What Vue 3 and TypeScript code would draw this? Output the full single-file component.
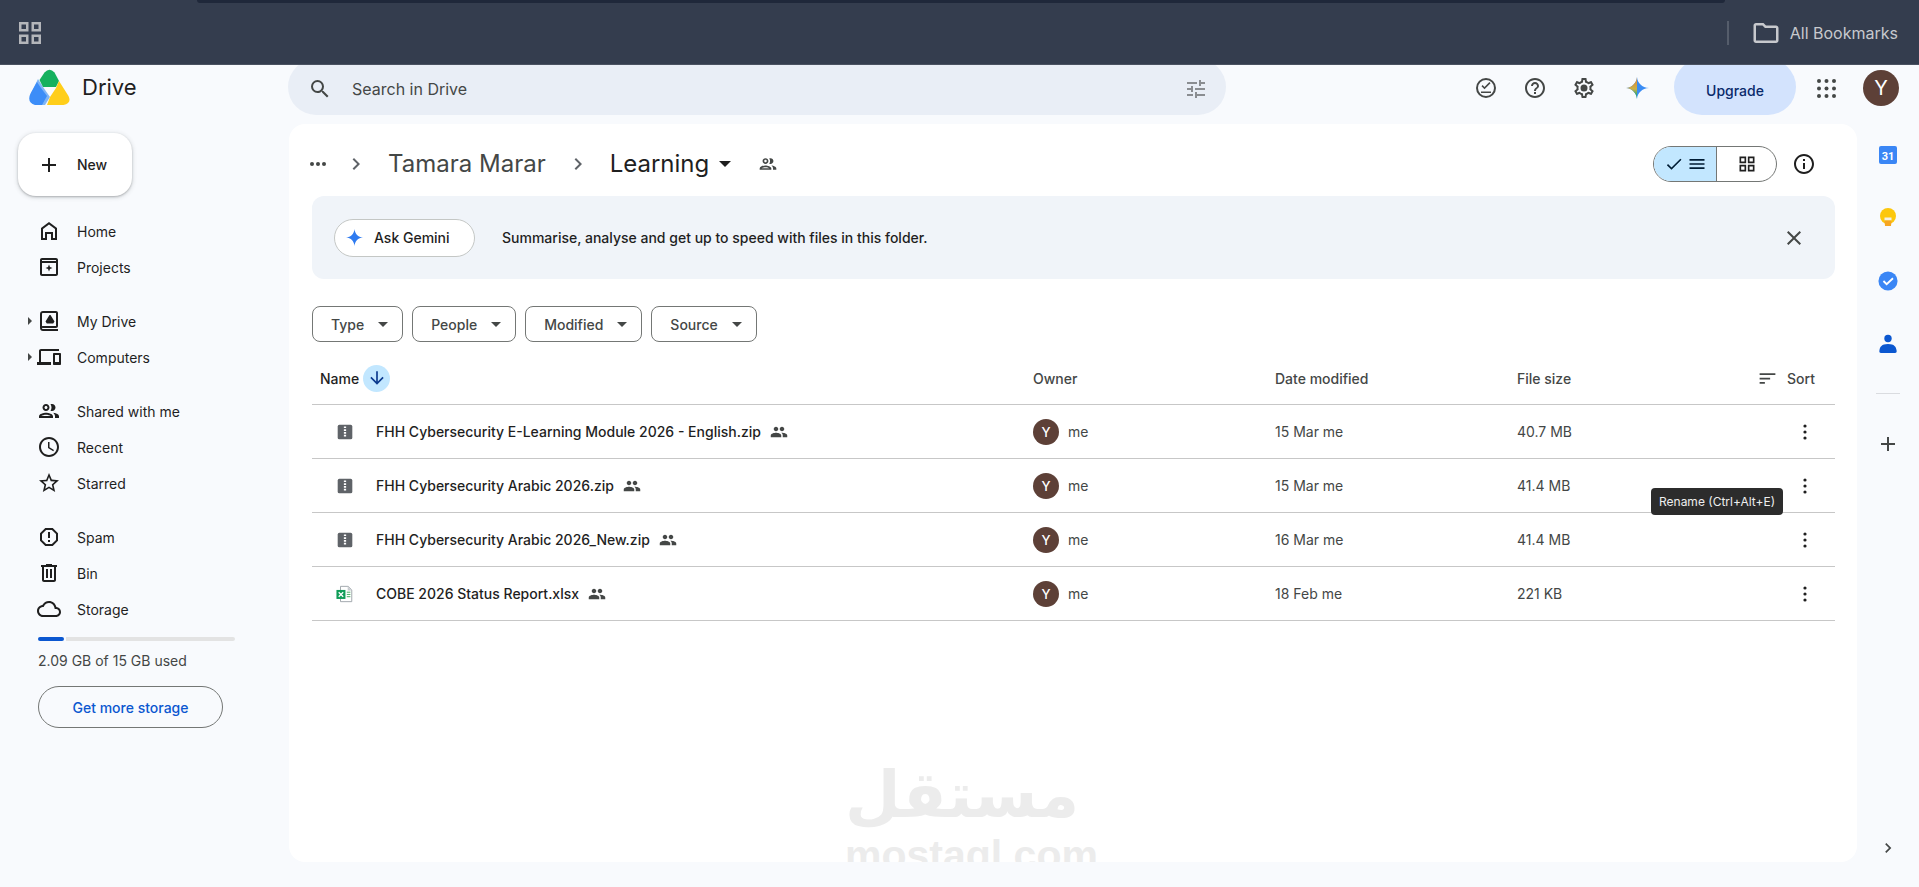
<script setup lang="ts">
const icons: Record<string, string> = {
  home: 'M12 3 4 9v12h6v-6h4v6h6V9l-8-6zm6 16h-2v-6H8v6H6v-9l6-4.5 6 4.5v9z',
  projects: 'M19 3H5c-1.1 0-2 .9-2 2v14c0 1.1.9 2 2 2h14c1.1 0 2-.9 2-2V5c0-1.1-.9-2-2-2zm0 16H5V8h14v11zM5 6V5h14v1H5zm7 3.5 1 2.5 2.5 1-2.5 1-1 2.5-1-2.5-2.5-1 2.5-1 1-2.5z',
  drive: 'M19 2H6C4.3 2 3 3.3 3 5v14c0 1.7 1.3 3 3 3h15v-2H6c-.6 0-1-.4-1-1v-.2c.3.1.6.2 1 .2h13c1.1 0 2-.9 2-2V4c0-1.1-.9-2-2-2zm0 15H6c-.4 0-.7.1-1 .2V5c0-.6.4-1 1-1h13v13zM12.500 6 8.500 12.500l1.300 2h6.400l1.300-2L13.500 6h-1z',
  computers: 'M4 6h18V4H4c-1.1 0-2 .9-2 2v11H0v3h14v-3H4V6zm19 2h-6c-.55 0-1 .45-1 1v10c0 .55.45 1 1 1h6c.55 0 1-.45 1-1V9c0-.55-.45-1-1-1zm-1 9h-4v-7h4v7z',
  shared: 'M9 13.75c-2.34 0-7 1.17-7 3.5V19h14v-1.75c0-2.33-4.66-3.5-7-3.5zM4.34 17c.84-.58 2.87-1.25 4.66-1.25s3.82.67 4.66 1.25H4.34zM9 12c1.93 0 3.5-1.57 3.5-3.5S10.93 5 9 5 5.5 6.57 5.5 8.5 7.07 12 9 12zm0-5c.83 0 1.5.67 1.5 1.5S9.83 10 9 10s-1.5-.67-1.5-1.5S8.17 7 9 7zm7.04 6.81c1.16.84 1.96 1.96 1.96 3.44V19h4v-1.75c0-2.02-3.5-3.17-5.96-3.44zM15 12c1.93 0 3.5-1.57 3.5-3.5S16.93 5 15 5c-.54 0-1.04.13-1.5.35.63.89 1 1.98 1 3.15s-.37 2.26-1 3.15c.46.22.96.35 1.5.35z',
  sharedFill: 'M16 11c1.66 0 2.99-1.34 2.99-3S17.66 5 16 5c-1.66 0-3 1.34-3 3s1.34 3 3 3zm-8 0c1.66 0 2.99-1.34 2.99-3S9.66 5 8 5C6.34 5 5 6.34 5 8s1.34 3 3 3zm0 2c-2.33 0-7 1.17-7 3.5V19h14v-2.500c0-2.33-4.67-3.500-7-3.500zm8 0c-.29 0-.62.02-.97.05 1.16.84 1.97 1.97 1.97 3.45V19h6v-2.500c0-2.33-4.67-3.500-7-3.500z',
  recent: 'M11.99 2C6.47 2 2 6.48 2 12s4.47 10 9.99 10C17.52 22 22 17.52 22 12S17.52 2 11.99 2zM12 20c-4.42 0-8-3.58-8-8s3.58-8 8-8 8 3.58 8 8-3.58 8-8 8zm.5-13H11v6l5.25 3.15.75-1.23-4.5-2.67z',
  starred: 'M22 9.24l-7.19-.62L12 2 9.19 8.63 2 9.24l5.46 4.73L5.82 21 12 17.27 18.18 21l-1.63-7.03L22 9.24zM12 15.4l-3.76 2.27 1-4.28-3.32-2.88 4.38-.38L12 6.1l1.71 4.04 4.38.38-3.32 2.88 1 4.28L12 15.4z',
  spam: 'M15.73 3H8.27L3 8.27v7.46L8.27 21h7.46L21 15.73V8.27L15.73 3zM19 14.9 14.9 19H9.1L5 14.9V9.1L9.1 5h5.8L19 9.1v5.8zM11 7h2v6h-2zm0 8h2v2h-2z',
  bin: 'M15 4V3H9v1H4v2h1v13c0 1.1.9 2 2 2h10c1.1 0 2-.9 2-2V6h1V4h-5zm2 15H7V6h10v13zM9 8h2v9H9zm4 0h2v9h-2z',
  storage: 'M12 6c2.62 0 4.88 1.86 5.39 4.43l.3 1.5 1.53.11c1.56.1 2.78 1.41 2.78 2.96 0 1.65-1.35 3-3 3H6c-2.21 0-4-1.79-4-4 0-2.05 1.53-3.76 3.56-3.97l1.07-.11.5-.95C8.08 7.14 9.94 6 12 6m0-2C9.11 4 6.6 5.64 5.35 8.04 2.34 8.36 0 10.91 0 14c0 3.31 2.69 6 6 6h13c2.76 0 5-2.24 5-5 0-2.64-2.05-4.78-4.65-4.96C18.67 6.59 15.64 4 12 4z',
  plus: 'M19 13h-6v6h-2v-6H5v-2h6V5h2v6h6v2z',
  search: 'M15.5 14h-.79l-.28-.27A6.471 6.471 0 0 0 16 9.5 6.5 6.5 0 1 0 9.5 16c1.61 0 3.09-.59 4.23-1.57l.27.28v.79l5 4.99L20.49 19l-4.99-5zm-6 0C7.01 14 5 11.99 5 9.5S7.01 5 9.5 5 14 7.01 14 9.5 11.99 14 9.5 14z',
  tune: 'M3 17v2h6v-2H3zM3 5v2h10V5H3zm10 16v-2h8v-2h-8v-2h-2v6h2zM7 9v2H3v2h4v2h2V9H7zm14 4v-2H11v2h10zm-6-4h2V7h4V5h-4V3h-2v6z',
  offline: 'M12 2a10 10 0 1 0 0 20 10 10 0 0 0 0-20zm0 18a8 8 0 1 1 0-16 8 8 0 0 1 0 16zM7 15.500h10v1.500H7zM10.500 13.200l-3-3 1.100-1.100 1.900 1.900 4.900-4.900 1.100 1.100z',
  help: 'M11 18h2v-2h-2v2zm1-16C6.48 2 2 6.48 2 12s4.48 10 10 10 10-4.48 10-10S17.52 2 12 2zm0 18c-4.41 0-8-3.59-8-8s3.59-8 8-8 8 3.59 8 8-3.59 8-8 8zm0-14c-2.21 0-4 1.79-4 4h2c0-1.1.9-2 2-2s2 .9 2 2c0 2-3 1.75-3 5h2c0-2.25 3-2.5 3-5 0-2.21-1.79-4-4-4z',
  settings: 'M19.43 12.98c.04-.32.07-.64.07-.98 0-.34-.03-.66-.07-.98l2.11-1.65c.19-.15.24-.42.12-.64l-2-3.46c-.09-.16-.26-.25-.44-.25-.06 0-.12.01-.17.03l-2.49 1c-.52-.4-1.08-.73-1.69-.98l-.38-2.65C14.46 2.18 14.25 2 14 2h-4c-.25 0-.46.18-.49.42l-.38 2.65c-.61.25-1.17.59-1.69.98l-2.49-1c-.06-.02-.12-.03-.18-.03-.17 0-.34.09-.43.25l-2 3.46c-.13.22-.07.49.12.64l2.11 1.65c-.04.32-.07.65-.07.98 0 .33.03.66.07.98l-2.11 1.65c-.19.15-.24.42-.12.64l2 3.46c.09.16.26.25.44.25.06 0 .12-.01.17-.03l2.49-1c.52.4 1.08.73 1.69.98l.38 2.65c.03.24.24.42.49.42h4c.25 0 .46-.18.49-.42l.38-2.65c.61-.25 1.17-.59 1.69-.98l2.49 1c.06.02.12.03.18.03.17 0 .34-.09.43-.25l2-3.46c.12-.22.07-.49-.12-.64l-2.11-1.65zm-1.98-1.71c.04.31.05.52.05.73 0 .21-.02.43-.05.73l-.14 1.13.89.7 1.08.84-.7 1.21-1.27-.51-1.04-.42-.9.68c-.43.32-.84.56-1.25.73l-1.06.43-.16 1.13-.2 1.35h-1.4l-.19-1.35-.16-1.13-1.06-.43c-.43-.18-.83-.41-1.23-.71l-.91-.7-1.06.43-1.27.51-.7-1.21 1.08-.84.89-.7-.14-1.13c-.03-.31-.05-.54-.05-.74s.02-.43.05-.73l.14-1.13-.89-.7-1.08-.84.7-1.21 1.27.51 1.04.42.9-.68c.43-.32.84-.56 1.25-.73l1.06-.43.16-1.13.2-1.35h1.39l.19 1.35.16 1.13 1.06.43c.43.18.83.41 1.23.71l.91.7 1.06-.43 1.27-.51.7 1.21-1.07.85-.89.7.14 1.13zM12 8.500a3.500 3.500 0 1 0 0 7 3.500 3.500 0 0 0 0-7z',
  chevron: 'M10 6 8.59 7.41 13.17 12l-4.58 4.59L10 18l6-6z',
  down: 'M20 12l-1.41-1.41L13 16.17V4h-2v12.17l-5.58-5.59L4 12l8 8 8-8z',
  sort: 'M3 18h6v-2H3v2zM3 6v2h18V6H3zm0 7h12v-2H3v2z',
  info: 'M11 7h2v2h-2zm0 4h2v6h-2zm1-9C6.48 2 2 6.48 2 12s4.48 10 10 10 10-4.48 10-10S17.52 2 12 2zm0 18c-4.41 0-8-3.59-8-8s3.59-8 8-8 8 3.59 8 8-3.59 8-8 8z',
  close: 'M19 6.41 17.59 5 12 10.59 6.41 5 5 6.41 10.59 12 5 17.59 6.41 19 12 13.41 17.59 19 19 17.59 13.41 12z',
  check: 'M9 16.17 4.83 12l-1.42 1.41L9 19 21 7l-1.41-1.41z',
  lines: 'M3 18h18v-2H3v2zm0-5h18v-2H3v2zm0-7v2h18V6H3z',
  grid: 'M3 3h8v8H3V3zm2 2v4h4V5H5zm8-2h8v8h-8V3zm2 2v4h4V5h-4zM3 13h8v8H3v-8zm2 2v4h4v-4H5zm8-2h8v8h-8v-8zm2 2v4h4v-4h-4z',
  folder: 'M9.17 6l2 2H20v10H4V6h5.17M10 4H4c-1.1 0-1.99.9-1.99 2L2 18c0 1.1.9 2 2 2h16c1.1 0 2-.9 2-2V8c0-1.1-.9-2-2-2h-8l-2-2z',
}

const navGroups = [
  [
    { label: 'Home', icon: 'home' },
    { label: 'Projects', icon: 'projects' },
  ],
  [
    { label: 'My Drive', icon: 'drive', caret: true },
    { label: 'Computers', icon: 'computers', caret: true },
  ],
  [
    { label: 'Shared with me', icon: 'shared' },
    { label: 'Recent', icon: 'recent' },
    { label: 'Starred', icon: 'starred' },
  ],
  [
    { label: 'Spam', icon: 'spam' },
    { label: 'Bin', icon: 'bin' },
    { label: 'Storage', icon: 'storage' },
  ],
]

const filters = ['Type', 'People', 'Modified', 'Source']

const files = [
  { name: 'FHH Cybersecurity E-Learning Module 2026 - English.zip', kind: 'zip', date: '15 Mar me', size: '40.7 MB' },
  { name: 'FHH Cybersecurity Arabic 2026.zip', kind: 'zip', date: '15 Mar me', size: '41.4 MB', tip: 'Rename (Ctrl+Alt+E)' },
  { name: 'FHH Cybersecurity Arabic 2026_New.zip', kind: 'zip', date: '16 Mar me', size: '41.4 MB' },
  { name: 'COBE 2026 Status Report.xlsx', kind: 'xlsx', date: '18 Feb me', size: '221 KB' },
]
</script>

<template>
  <div class="page">
    <div class="browser-bar">
      <div class="tab-strip"></div>
      <div class="bookmarks">
        <svg class="apps-icon" viewBox="0 0 22 22">
          <path d="M0 0h9.500v9.500H0V0zm2.500 2.500v4.500h4.500V2.500H2.500zM12.500 0H22v9.500h-9.500V0zM15 2.500v4.500h4.500V2.500H15zM0 12.500h9.500V22H0v-9.500zM2.500 15v4.500h4.500V15H2.500zM12.500 12.500H22V22h-9.500v-9.500zM15 15v4.500h4.500V15H15z" />
        </svg>
        <span class="bar-divider"></span>
        <svg class="folder-icon" viewBox="0 0 24 24"><path :d="icons.folder" /></svg>
        <span class="all-bookmarks">All Bookmarks</span>
      </div>
    </div>

    <header class="topbar">
      <div class="brand">
        <svg class="logo" viewBox="0 0 41 36">
          <path fill="#7fb5f7" d="M9 10 14 18 21 28 16 36H6L2 24z" />
          <path fill="#15b15e" d="M10.500 11 15.500 3.500Q20.500-2 25.500 3.500L30 12 27 18H14z" />
          <path fill="#3c8df8" d="M8 13 1.500 24.500Q-2.500 33 6 36H13L18 27 12 19z" />
          <path fill="#ffce1a" d="M30 12 39.500 27Q43 34.500 34.500 36H18L21 28 27 19z" />
        </svg>
        <span class="brand-name">Drive</span>
      </div>
      <div class="search">
        <svg class="icon search-icon" viewBox="0 0 24 24"><path :d="icons.search" /></svg>
        <span class="search-text">Search in Drive</span>
        <svg class="icon tune-icon" viewBox="0 0 24 24"><path :d="icons.tune" /></svg>
      </div>
      <div class="top-actions">
        <svg class="icon top-icon" viewBox="0 0 24 24"><path :d="icons.offline" /></svg>
        <svg class="icon top-icon" viewBox="0 0 24 24"><path :d="icons.help" /></svg>
        <svg class="icon top-icon" viewBox="0 0 24 24"><path :d="icons.settings" /></svg>
        <svg class="gemini-top" viewBox="0 0 24 24">
          <defs>
            <linearGradient id="gemLeft" x1="0" y1="0" x2="0" y2="1">
              <stop offset="0.25" stop-color="#d9963c" />
              <stop offset="0.55" stop-color="#c9b24a" />
              <stop offset="0.8" stop-color="#38a872" />
            </linearGradient>
            <clipPath id="gemClip"><rect x="0" y="0" width="11" height="24" /></clipPath>
          </defs>
          <path fill="#3a8cf4" d="M11 1C11.500 7 16 11.500 23 12 16 12.500 11.500 17 11 23 10.500 17 6 12.500 0 12 6 11.500 10.500 7 11 1Z" />
          <path fill="url(#gemLeft)" clip-path="url(#gemClip)" d="M11 1C11.500 7 16 11.500 23 12 16 12.500 11.500 17 11 23 10.500 17 6 12.500 0 12 6 11.500 10.500 7 11 1Z" />
        </svg>
        <div class="upgrade">Upgrade</div>
        <svg class="waffle" viewBox="0 0 19 19" fill="#444746">
          <template v-for="row in [2, 9.5, 17]" :key="row">
            <circle v-for="col in [2, 9.500, 17]" :key="col" :cx="col" :cy="row" r="2" />
          </template>
        </svg>
        <div class="avatar-large">Y</div>
      </div>
    </header>

    <div class="body">
      <aside class="sidebar">
        <button type="button" class="new-btn">
          <svg class="icon" viewBox="0 0 24 24"><path :d="icons.plus" /></svg>
          <span>New</span>
        </button>

        <nav class="nav">
          <div v-for="(group, i) in navGroups" :key="i" class="nav-group">
            <div v-for="item in group" :key="item.label" class="nav-item">
              <span class="caret-slot"><i v-if="item.caret" class="side-caret"></i></span>
              <svg class="icon" viewBox="0 0 24 24"><path :d="icons[item.icon]" /></svg>
              <span>{{ item.label }}</span>
            </div>
          </div>
        </nav>

        <div class="meter"><span class="meter-fill"></span><span class="meter-rest"></span></div>
        <p class="usage">2.09 GB of 15 GB used</p>
        <button type="button" class="storage-btn">Get more storage</button>
      </aside>

      <main class="card">
        <div class="crumbs">
          <svg class="dots" viewBox="0 0 24 24" fill="#444746">
            <circle cx="6" cy="12" r="2" /><circle cx="12" cy="12" r="2" /><circle cx="18" cy="12" r="2" />
          </svg>
          <svg class="icon crumb-chevron first" viewBox="0 0 24 24"><path :d="icons.chevron" /></svg>
          <span class="crumb parent">Tamara Marar</span>
          <svg class="icon crumb-chevron" viewBox="0 0 24 24"><path :d="icons.chevron" /></svg>
          <span class="crumb current">Learning</span>
          <i class="crumb-caret"></i>
          <svg class="icon crumb-people" viewBox="0 0 24 24"><path :d="icons.shared" /></svg>
          <div class="toggle">
            <span class="toggle-list">
              <svg class="icon" viewBox="0 0 24 24"><path :d="icons.check" /></svg>
              <svg class="icon" viewBox="0 0 24 24"><path :d="icons.lines" /></svg>
            </span>
            <span class="toggle-grid">
              <svg class="icon" viewBox="0 0 24 24"><path :d="icons.grid" /></svg>
            </span>
          </div>
          <svg class="icon info-icon" viewBox="0 0 24 24"><path :d="icons.info" /></svg>
        </div>

        <div class="banner">
          <div class="ask">
            <svg class="ask-star" viewBox="0 0 24 24"><path d="M12 0C12.600 7 17 11.400 24 12 17 12.600 12.600 17 12 24 11.400 17 7 12.600 0 12 7 11.400 11.400 7 12 0Z" /></svg>
            <span>Ask Gemini</span>
          </div>
          <span class="banner-text">Summarise, analyse and get up to speed with files in this folder.</span>
          <svg class="icon banner-close" viewBox="0 0 24 24"><path :d="icons.close" /></svg>
        </div>

        <div class="filters">
          <div v-for="f in filters" :key="f" class="filter">
            <span>{{ f }}</span>
            <i class="filter-caret"></i>
          </div>
        </div>

        <div class="table-row table-head">
          <div class="name-head">
            <span>Name</span>
            <span class="sort-arrow"><svg viewBox="0 0 24 24"><path :d="icons.down" /></svg></span>
          </div>
          <div>Owner</div>
          <div>Date modified</div>
          <div class="size-head">
            <span>File size</span>
            <span class="sort-link">
              <svg class="icon" viewBox="0 0 24 24"><path :d="icons.sort" /></svg>
              Sort
            </span>
          </div>
        </div>

        <div v-for="file in files" :key="file.name" class="table-row file-row">
          <div class="file-name">
            <svg v-if="file.kind === 'zip'" class="type-icon" viewBox="0 0 16 16">
              <rect x="1.500" y="1.500" width="13" height="13" rx="1.500" fill="#5f6368" />
              <path fill="#fff" d="M7 3h2v1.500H7zM7 5.500h2V7H7zM7 8h2v1.500H7zM7 10.500h2V12H7z" />
            </svg>
            <svg v-else class="type-icon" viewBox="0 0 20 20">
              <path fill="#fff" stroke="#9aa0a6" d="M5 1.500h8.500l4 4v13H5z" />
              <path fill="#c8ccd0" d="M13 1.500v4.500h4.500z" />
              <rect x="0.500" y="5.500" width="10" height="10" fill="#0f9d58" />
              <path stroke="#fff" stroke-width="1.500" d="M3 8l5 5M8 8l-5 5" />
              <path stroke="#34a853" d="M12 8h4M12 10.500h4M12 13h4" />
            </svg>
            <span class="file-title">{{ file.name }}</span>
            <svg class="shared-mini" viewBox="0 0 24 24"><path :d="icons.sharedFill" /></svg>
          </div>
          <div class="owner"><span class="avatar-small">Y</span>me</div>
          <div class="muted">{{ file.date }}</div>
          <div class="size-cell">
            <span class="muted">{{ file.size }}</span>
            <svg class="kebab" viewBox="0 0 24 24"><circle cx="12" cy="6" r="1.600" /><circle cx="12" cy="12" r="1.600" /><circle cx="12" cy="18" r="1.600" /></svg>
          </div>
          <div v-if="file.tip" class="tooltip">{{ file.tip }}</div>
        </div>

        <div class="watermark">
          <div class="wm-arabic">مستقل</div>
          <div class="wm-latin">mostaql.com</div>
        </div>
      </main>

      <aside class="rail">
        <svg class="rail-icon" viewBox="0 0 20 20">
          <rect x="1" y="1" width="18" height="18" rx="2" fill="#3a86f5" />
          <text x="10" y="14.500" text-anchor="middle" class="cal-text">31</text>
        </svg>
        <svg class="rail-icon" viewBox="0 0 20 20">
          <circle cx="10" cy="8" r="8" fill="#fcc70d" />
          <path d="M6.500 9.500h7v3h-7z" fill="#f3f0e6" />
          <path d="M6.500 12.500h7l-.5 5.500h-6z" fill="#f6a623" />
        </svg>
        <svg class="rail-icon" viewBox="0 0 22 22">
          <circle cx="11" cy="11" r="10.500" fill="#3a86f5" />
          <path d="M6 11l3.500 3.500L16.500 8" fill="none" stroke="#fff" stroke-width="2" />
        </svg>
        <svg class="rail-icon" viewBox="0 0 20 20">
          <circle cx="10" cy="4.500" r="3.700" fill="#0b57d0" />
          <path d="M3 19c-1.500 0-2-1-1.500-3 .5-3 2-6 8.500-6s8 3 8.500 6c.5 2 0 3-1.500 3z" fill="#0b57d0" />
        </svg>
        <span class="rail-divider"></span>
        <svg class="icon rail-plus" viewBox="0 0 24 24"><path :d="icons.plus" /></svg>
        <svg class="icon rail-chevron" viewBox="0 0 24 24"><path :d="icons.chevron" /></svg>
      </aside>
    </div>
  </div>
</template>

<style>
html,
body {
  margin: 0;
  background: #f8fafd;
}
</style>

<style scoped>
.page {
  width: 1919px;
  height: 887px;
  overflow: hidden;
  display: flex;
  flex-direction: column;
  background: #f8fafd;
  font-family: Inter, Roboto, "Liberation Sans", sans-serif;
  font-size: 14px;
  color: #1f1f1f;
}

.icon {
  width: 24px;
  height: 24px;
  flex: none;
  fill: #1f1f1f;
}

button {
  font-family: inherit;
  padding: 0;
}

/* browser chrome */
.browser-bar {
  height: 65px;
  flex: none;
  background: #343d4e;
  box-shadow: inset 0 -1px 0 #4a5261;
}

.tab-strip {
  height: 3px;
  margin: 0 194px 0 197px;
  background: #1f283a;
  border-radius: 0 0 4px 4px;
}

.bookmarks {
  height: 60px;
  display: flex;
  align-items: center;
  padding: 0 21px 0 19px;
  color: #c7c9cd;
}

.apps-icon {
  width: 22px;
  height: 22px;
  fill: #b4b6ba;
  margin-right: auto;
}

.bar-divider {
  width: 2px;
  height: 24px;
  background: #555d6b;
  margin-right: 22px;
}

.folder-icon {
  width: 30px;
  height: 30px;
  fill: #c7c9cd;
  margin-right: 9px;
}

.all-bookmarks {
  font-size: 16px;
}

/* drive header */
.topbar {
  height: 59px;
  flex: none;
  display: flex;
  align-items: flex-start;
  overflow: hidden;
}

.brand {
  width: 288px;
  flex: none;
  display: flex;
  align-items: center;
  padding-left: 29px;
  box-sizing: border-box;
  margin-top: 4px;
}

.logo {
  width: 41px;
  height: 36px;
}

.brand-name {
  margin-left: 12px;
  font-size: 22px;
  color: #1f1f1f;
}

.search {
  width: 938px;
  height: 56px;
  margin-top: -6px;
  flex: none;
  display: flex;
  align-items: center;
  padding: 4px 18px 0 20px;
  box-sizing: border-box;
  background: #e9eef6;
  border-radius: 28px;
}

.search-icon {
  fill: #444746;
}

.search-text {
  margin-left: 20px;
  font-size: 16px;
  color: #444746;
}

.tune-icon {
  margin-left: auto;
  fill: #8a8d91;
}

.top-actions {
  flex: 1;
  height: 46px;
  display: flex;
  align-items: center;
}

.top-icon {
  margin-right: 25px;
  fill: #444746;
}

.top-icon:first-child {
  margin-left: 248px;
}

.gemini-top {
  width: 24px;
  height: 24px;
  margin-left: 5px;
  margin-right: 24px;
}

.upgrade {
  width: 122px;
  height: 56px;
  align-self: flex-start;
  margin-top: -6px;
  padding-top: 6px;
  box-sizing: border-box;
  display: flex;
  align-items: center;
  justify-content: center;
  background: #d3e3fd;
  border-radius: 28px;
  color: #0a2a6b;
  font-size: 14px;
  font-weight: 500;
}

.waffle {
  width: 19px;
  height: 19px;
  margin-left: 21px;
}

.avatar-large {
  width: 36px;
  height: 36px;
  margin-left: 27px;
  border-radius: 50%;
  background: #5d4037;
  color: #fff;
  display: grid;
  place-items: center;
  font-size: 20px;
}

/* layout */
.body {
  flex: 1;
  min-height: 0;
  display: flex;
  padding-bottom: 25px;
}

/* sidebar */
.sidebar {
  width: 289px;
  flex: none;
  padding-top: 9px;
  box-sizing: border-box;
}

.new-btn {
  width: 114px;
  height: 63px;
  margin-left: 18px;
  display: flex;
  align-items: center;
  gap: 16px;
  padding-left: 19px;
  box-sizing: border-box;
  border: none;
  border-radius: 18px;
  background: #fff;
  font-size: 14px;
  font-weight: 500;
  color: #1f1f1f;
  box-shadow: 0 1px 2px rgba(60, 64, 67, 0.3), 0 1px 4px 1px rgba(60, 64, 67, 0.15);
}

.nav {
  margin-top: 17px;
  display: flex;
  flex-direction: column;
  gap: 18px;
}

.nav-item {
  height: 36px;
  display: flex;
  align-items: center;
  padding-left: 28px;
}

.nav-item .icon {
  margin-right: 16px;
}

.caret-slot {
  width: 9px;
  flex: none;
}

.side-caret {
  display: block;
  width: 0;
  height: 0;
  border-left: 4px solid #444746;
  border-top: 4px solid transparent;
  border-bottom: 4px solid transparent;
}

.meter {
  display: flex;
  gap: 2px;
  width: 197px;
  height: 4px;
  margin: 10px 0 0 38px;
}

.meter-fill {
  width: 26px;
  background: #0b57d0;
  border-radius: 2px;
}

.meter-rest {
  flex: 1;
  background: #e3e3e3;
  border-radius: 0 2px 2px 0;
}

.usage {
  margin: 10px 0 0 38px;
  line-height: 20px;
  color: #444746;
}

.storage-btn {
  display: block;
  width: 185px;
  height: 42px;
  margin: 15px 0 0 38px;
  border: 1px solid #747775;
  border-radius: 21px;
  background: transparent;
  color: #0b57d0;
  font-size: 14px;
  font-weight: 500;
}

/* main card */
.card {
  position: relative;
  flex: 1;
  min-width: 0;
  padding: 22px 22px 0 23px;
  background: #fff;
  border-radius: 16px;
  overflow: hidden;
}

.crumbs {
  height: 36px;
  display: flex;
  align-items: center;
}

.dots {
  width: 24px;
  height: 24px;
  margin-left: -6px;
}

.crumb-chevron {
  fill: #5f6368;
  margin: 0 20px;
}

.crumb-chevron.first {
  margin: 0 20px 0 14px;
}

.crumb {
  font-size: 24px;
  line-height: 36px;
}

.parent {
  color: #444746;
}

.crumb-caret {
  width: 0;
  height: 0;
  margin-left: 10px;
  border-left: 6px solid transparent;
  border-right: 6px solid transparent;
  border-top: 6px solid #1f1f1f;
}

.crumb-people {
  width: 20px;
  height: 20px;
  margin-left: 27px;
  fill: #444746;
}

.toggle {
  margin-left: auto;
  width: 124px;
  height: 36px;
  box-sizing: border-box;
  display: flex;
  border: 1px solid #747775;
  border-radius: 18px;
  overflow: hidden;
}

.toggle-list {
  width: 62px;
  display: flex;
  align-items: center;
  justify-content: center;
  gap: 3px;
  background: #c2e7ff;
  border-right: 1px solid #747775;
}

.toggle-list .icon {
  width: 20px;
  height: 20px;
  fill: #001d35;
}

.toggle-grid {
  flex: 1;
  display: flex;
  align-items: center;
  justify-content: center;
}

.toggle-grid .icon {
  width: 20px;
  height: 20px;
}

.info-icon {
  margin: 0 19px 0 15px;
}

.banner {
  height: 83px;
  margin-top: 14px;
  display: flex;
  align-items: center;
  padding: 0 29px 0 22px;
  background: #f0f4f9;
  border-radius: 12px;
}

.ask {
  width: 141px;
  height: 38px;
  box-sizing: border-box;
  display: flex;
  align-items: center;
  padding-left: 11px;
  gap: 11px;
  background: #fff;
  border: 1px solid #c4c7c5;
  border-radius: 19px;
  font-weight: 500;
}

.ask-star {
  width: 17px;
  height: 17px;
  fill: #2f7bf0;
}

.banner-text {
  margin-left: 27px;
  font-weight: 500;
}

.banner-close {
  margin-left: auto;
  fill: #444746;
}

.filters {
  margin-top: 27px;
  display: flex;
  gap: 9px;
}

.filter {
  height: 36px;
  box-sizing: border-box;
  display: flex;
  align-items: center;
  gap: 14px;
  padding: 0 14px 0 18px;
  border: 1px solid #747775;
  border-radius: 8px;
  font-weight: 500;
  color: #444746;
}

.filter-caret {
  width: 0;
  height: 0;
  border-left: 5px solid transparent;
  border-right: 5px solid transparent;
  border-top: 5px solid #444746;
}

/* table */
.table-row {
  display: grid;
  grid-template-columns: 721px 242px 242px 1fr;
  align-items: center;
  border-bottom: 1px solid #c7c7c7;
  box-sizing: border-box;
}

.table-head {
  height: 53px;
  margin-top: 10px;
  font-weight: 500;
  color: #444746;
}

.name-head {
  display: flex;
  align-items: center;
  gap: 4px;
  padding-left: 8px;
  color: #1f1f1f;
}

.sort-arrow {
  width: 27px;
  height: 27px;
  border-radius: 50%;
  background: #c2e7ff;
  display: grid;
  place-items: center;
}

.sort-arrow svg {
  width: 20px;
  height: 20px;
  fill: #0b3a8f;
}

.size-head {
  display: flex;
  align-items: center;
  justify-content: space-between;
  padding-right: 20px;
}

.sort-link {
  display: flex;
  align-items: center;
  gap: 9px;
}

.sort-link .icon {
  width: 21px;
  height: 21px;
  fill: #444746;
}

.file-row {
  position: relative;
  height: 54px;
}

.file-name {
  display: flex;
  align-items: center;
  padding-left: 24px;
}

.type-icon {
  width: 18px;
  height: 18px;
  flex: none;
}

.file-title {
  margin-left: 22px;
  font-weight: 500;
}

.shared-mini {
  width: 18px;
  height: 18px;
  margin-left: 9px;
  fill: #444746;
}

.owner {
  display: flex;
  align-items: center;
  gap: 9px;
  color: #444746;
}

.avatar-small {
  width: 26px;
  height: 26px;
  border-radius: 50%;
  background: #5d4037;
  color: #fff;
  display: grid;
  place-items: center;
  font-size: 13px;
  font-weight: 500;
}

.muted {
  color: #444746;
}

.size-cell {
  display: flex;
  align-items: center;
  justify-content: space-between;
  padding-right: 18px;
}

.kebab {
  width: 24px;
  height: 24px;
  fill: #1f1f1f;
}

.tooltip {
  position: absolute;
  top: 29px;
  left: 1339px;
  z-index: 2;
  height: 27px;
  padding: 0 8px;
  display: flex;
  align-items: center;
  border-radius: 4px;
  background: #2c2c2c;
  color: #eee;
  font-size: 12px;
  white-space: nowrap;
}

.watermark {
  position: absolute;
  top: 631px;
  left: 556px;
  width: 232px;
  text-align: center;
  color: #ececec;
}

.wm-arabic {
  font-family: "DejaVu Sans", sans-serif;
  font-weight: 700;
  font-size: 64px;
  line-height: 80px;
}

.wm-latin {
  font-family: "Liberation Sans", sans-serif;
  font-weight: 700;
  font-size: 41px;
  line-height: 40px;
}

/* right rail */
.rail {
  width: 62px;
  flex: none;
  display: flex;
  flex-direction: column;
  align-items: center;
  padding-top: 21px;
  box-sizing: border-box;
}

.rail-icon {
  width: 20px;
  height: 20px;
  margin-bottom: 43px;
}

.cal-text {
  font-family: Roboto, sans-serif;
  font-size: 11px;
  font-weight: 700;
  fill: #fff;
}

.rail-divider {
  width: 24px;
  height: 1px;
  background: #dadce0;
  margin-top: -4px;
}

.rail-plus {
  margin-top: 38px;
  fill: #444746;
}

.rail-chevron {
  width: 20px;
  height: 20px;
  margin-top: auto;
  margin-bottom: 4px;
  fill: #444746;
}
</style>
